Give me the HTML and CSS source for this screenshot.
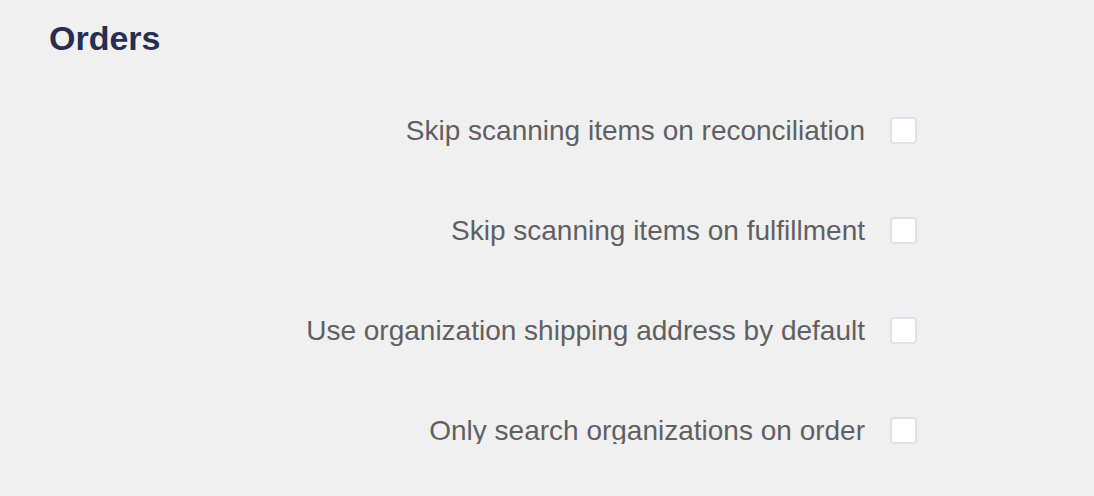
FILE: index.html
```html
<!DOCTYPE html>
<html>
<head>
<meta charset="utf-8">
<link rel="stylesheet" href="styles.css">
</head>
<body>
<section class="panel">
  <h2 class="title">Orders</h2>
  <div class="rows">
    <label class="row"><span class="label">Skip scanning items on reconciliation</span><input type="checkbox" class="check"></label>
    <label class="row"><span class="label">Skip scanning items on fulfillment</span><input type="checkbox" class="check"></label>
    <label class="row"><span class="label">Use organization shipping address by default</span><input type="checkbox" class="check"></label>
    <label class="row"><span class="label">Only search organizations on order</span><input type="checkbox" class="check"></label>
  </div>
</section>
</body>
</html>
```

FILE: styles.css
```css
html, body {
  margin: 0;
  padding: 0;
  background: #f0f0f0;
}
body {
  font-family: "Liberation Sans", Arial, sans-serif;
}
.panel {
  padding: 18px 0 0 49px;
}
.title {
  margin: 0;
  font-size: 34px;
  font-weight: 700;
  color: #262f4f;
  line-height: 40px;
}
.rows {
  display: flex;
  flex-direction: column;
  gap: 73px;
  margin-top: 59px;
  width: 868px;
}
.row {
  display: flex;
  justify-content: flex-end;
  align-items: center;
  gap: 25px;
  height: 27px;
}
.label {
  font-size: 28px;
  color: #606064;
}
.check {
  appearance: none;
  -webkit-appearance: none;
  margin: 0;
  width: 27px;
  height: 27px;
  box-sizing: border-box;
  border: 2px solid #dfe2e8;
  border-radius: 4px;
  background: #fff;
}
```
